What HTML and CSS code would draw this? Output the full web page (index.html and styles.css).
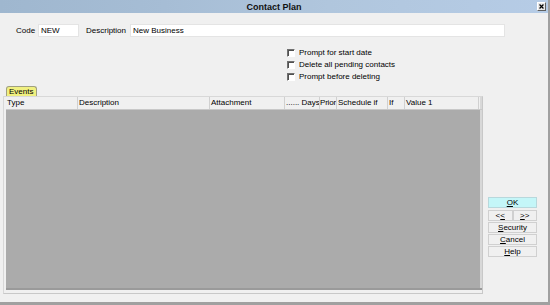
FILE: index.html
```html
<!DOCTYPE html>
<html>
<head>
<meta charset="utf-8">
<link rel="stylesheet" href="styles.css">
</head>
<body>
<div class="window">
  <div class="titlebar">
    <span class="title">Contact Plan</span>
    <span class="close">
      <svg width="9" height="9" viewBox="0 0 9 9"><path d="M2 2 L7 7 M7 2 L2 7" stroke="#000" stroke-width="1.6"/></svg>
    </span>
  </div>
  <div class="top-row">
    <span class="lbl code-lbl">Code</span>
    <span class="field code-field">NEW</span>
    <span class="lbl desc-lbl">Description</span>
    <span class="field desc-field">New Business</span>
  </div>
  <div class="checks">
    <div class="chk"><span class="box"></span>Prompt for start date</div>
    <div class="chk"><span class="box"></span>Delete all pending contacts</div>
    <div class="chk"><span class="box"></span>Prompt before deleting</div>
  </div>
  <div class="main">
    <div class="left">
      <div class="tab">Events</div>
      <div class="panel">
        <div class="grid">
          <div class="head">
            <span class="c1">Type</span>
            <span class="c2">Description</span>
            <span class="c3">Attachment</span>
            <span class="c4">...... Days</span>
            <span class="c5">Prior</span>
            <span class="c6">Schedule if</span>
            <span class="c7">If</span>
            <span class="c8">Value 1</span>
            <span class="c9"></span>
          </div>
          <div class="body"></div>
        </div>
      </div>
    </div>
    <div class="buttons">
      <div class="btn ok"><u>O</u>K</div>
      <div class="pair"><div class="btn half">&lt;<u>&lt;</u></div><div class="btn half"><u>&gt;</u>&gt;</div></div>
      <div class="btn"><u>S</u>ecurity</div>
      <div class="btn"><u>C</u>ancel</div>
      <div class="btn"><u>H</u>elp</div>
    </div>
  </div>
  <div class="bottom-line"></div>
</div>
</body>
</html>
```
FILE: styles.css
```css
html, body {
  margin: 0;
  padding: 0;
  background: #f0f0f0;
}
.window {
  width: 550px;
  height: 305px;
  background: #f0f0f0;
  font-family: "Liberation Sans", Arial, sans-serif;
  font-size: 8px;
  color: #000;
  display: flex;
  flex-direction: column;
  box-sizing: border-box;
  border-right: 2px solid #a0a0a0;
  overflow: hidden;
}
.titlebar {
  height: 13px;
  flex: none;
  background: linear-gradient(to right, #9fb7cf 0%, #a6bdd5 30%, #b0c6dd 60%, #b6cce6 100%);
  display: flex;
  align-items: center;
  justify-content: center;
  position: relative;
}
.title {
  font-weight: bold;
  font-size: 9px;
  color: #111;
}
.close {
  position: absolute;
  right: 2px;
  top: 2px;
  width: 9px;
  height: 9px;
  background: #e8e8e8;
  border: 1px solid;
  border-color: #fff #606060 #606060 #fff;
  box-sizing: border-box;
  display: flex;
  align-items: center;
  justify-content: center;
}
.close svg { width: 7px; height: 7px; }
.top-row {
  display: flex;
  align-items: center;
  margin-top: 11px;
  height: 13px;
  flex: none;
}
.lbl { white-space: nowrap; }
.code-lbl { margin-left: 16px; width: 22px; }
.field {
  height: 13px;
  background: #fff;
  border: 1px solid #e4e4e4;
  box-sizing: border-box;
  padding: 0 2px;
  line-height: 11px;
}
.code-field { width: 41px; }
.desc-lbl { margin-left: 7px; width: 44px; }
.desc-field { width: 375px; }
.checks {
  margin-top: 11px;
  margin-left: 287px;
  display: flex;
  flex-direction: column;
  gap: 3px;
  flex: none;
}
.chk {
  display: flex;
  align-items: center;
  height: 9px;
  line-height: 9px;
}
.box {
  width: 8px;
  height: 8px;
  box-sizing: border-box;
  border: 1px solid;
  border-color: #707070 #fff #fff #707070;
  background: #fff;
  box-shadow: inset 1px 1px 0 #505050;
  margin-right: 4px;
}
.main {
  display: flex;
  margin-top: 5px;
  flex: none;
}
.left {
  margin-left: 3px;
  width: 480px;
  display: flex;
  flex-direction: column;
}
.tab {
  margin-left: 3px;
  width: 31px;
  height: 10px;
  box-sizing: border-box;
  background: #f0f080;
  border: 1px solid #a0a080;
  border-bottom: none;
  border-radius: 3px 3px 0 0;
  line-height: 9px;
  padding-left: 2px;
  font-size: 8px;
}
.panel {
  height: 198px;
  border: 1px solid #d8d8d8;
  border-right-color: #c8c8c8;
  border-bottom-color: #c8c8c8;
  background: #f0f0f0;
  box-sizing: border-box;
  padding: 0 2px 3px 2px;
  display: flex;
}
.grid {
  flex: 1;
  display: flex;
  flex-direction: column;
  border-bottom: 2px solid #9a9a9a;
}
.head {
  display: grid;
  grid-template-columns: 72px 132px 75px 35px 17px 51px 17px 74px 1fr;
  height: 12px;
  flex: none;
  background: #f0f0f0;
  border-bottom: 1px solid #c8c8c8;
}
.head span {
  border-right: 1px solid #d0d0d0;
  line-height: 12px;
  padding-left: 1px;
  white-space: nowrap;
  overflow: hidden;
}
.head .c5 { padding-left: 0; letter-spacing: -0.2px; }
.head .c9 { border-right: 2px solid #d8d8d8; }
.body {
  flex: 1;
  background: #ababab;
  border-right: 2px solid #d8d8d8;
}
.buttons {
  margin-left: 5px;
  margin-top: 111px;
  width: 49px;
  display: flex;
  flex-direction: column;
  gap: 1px;
}
.btn {
  height: 11px;
  box-sizing: border-box;
  border: 1px solid #d0d0d0;
  background: #f0f0f0;
  text-align: center;
  line-height: 9px;
  font-size: 8px;
}
.btn.ok {
  background: #c4f6f8;
  border-color: #b8d8dc;
  margin-bottom: 1px;
}
.pair { display: flex; }
.btn.half { flex: 1; }
.bottom-line {
  margin-top: auto;
  height: 3px;
  background: #a0a0a0;
  flex: none;
}
```
